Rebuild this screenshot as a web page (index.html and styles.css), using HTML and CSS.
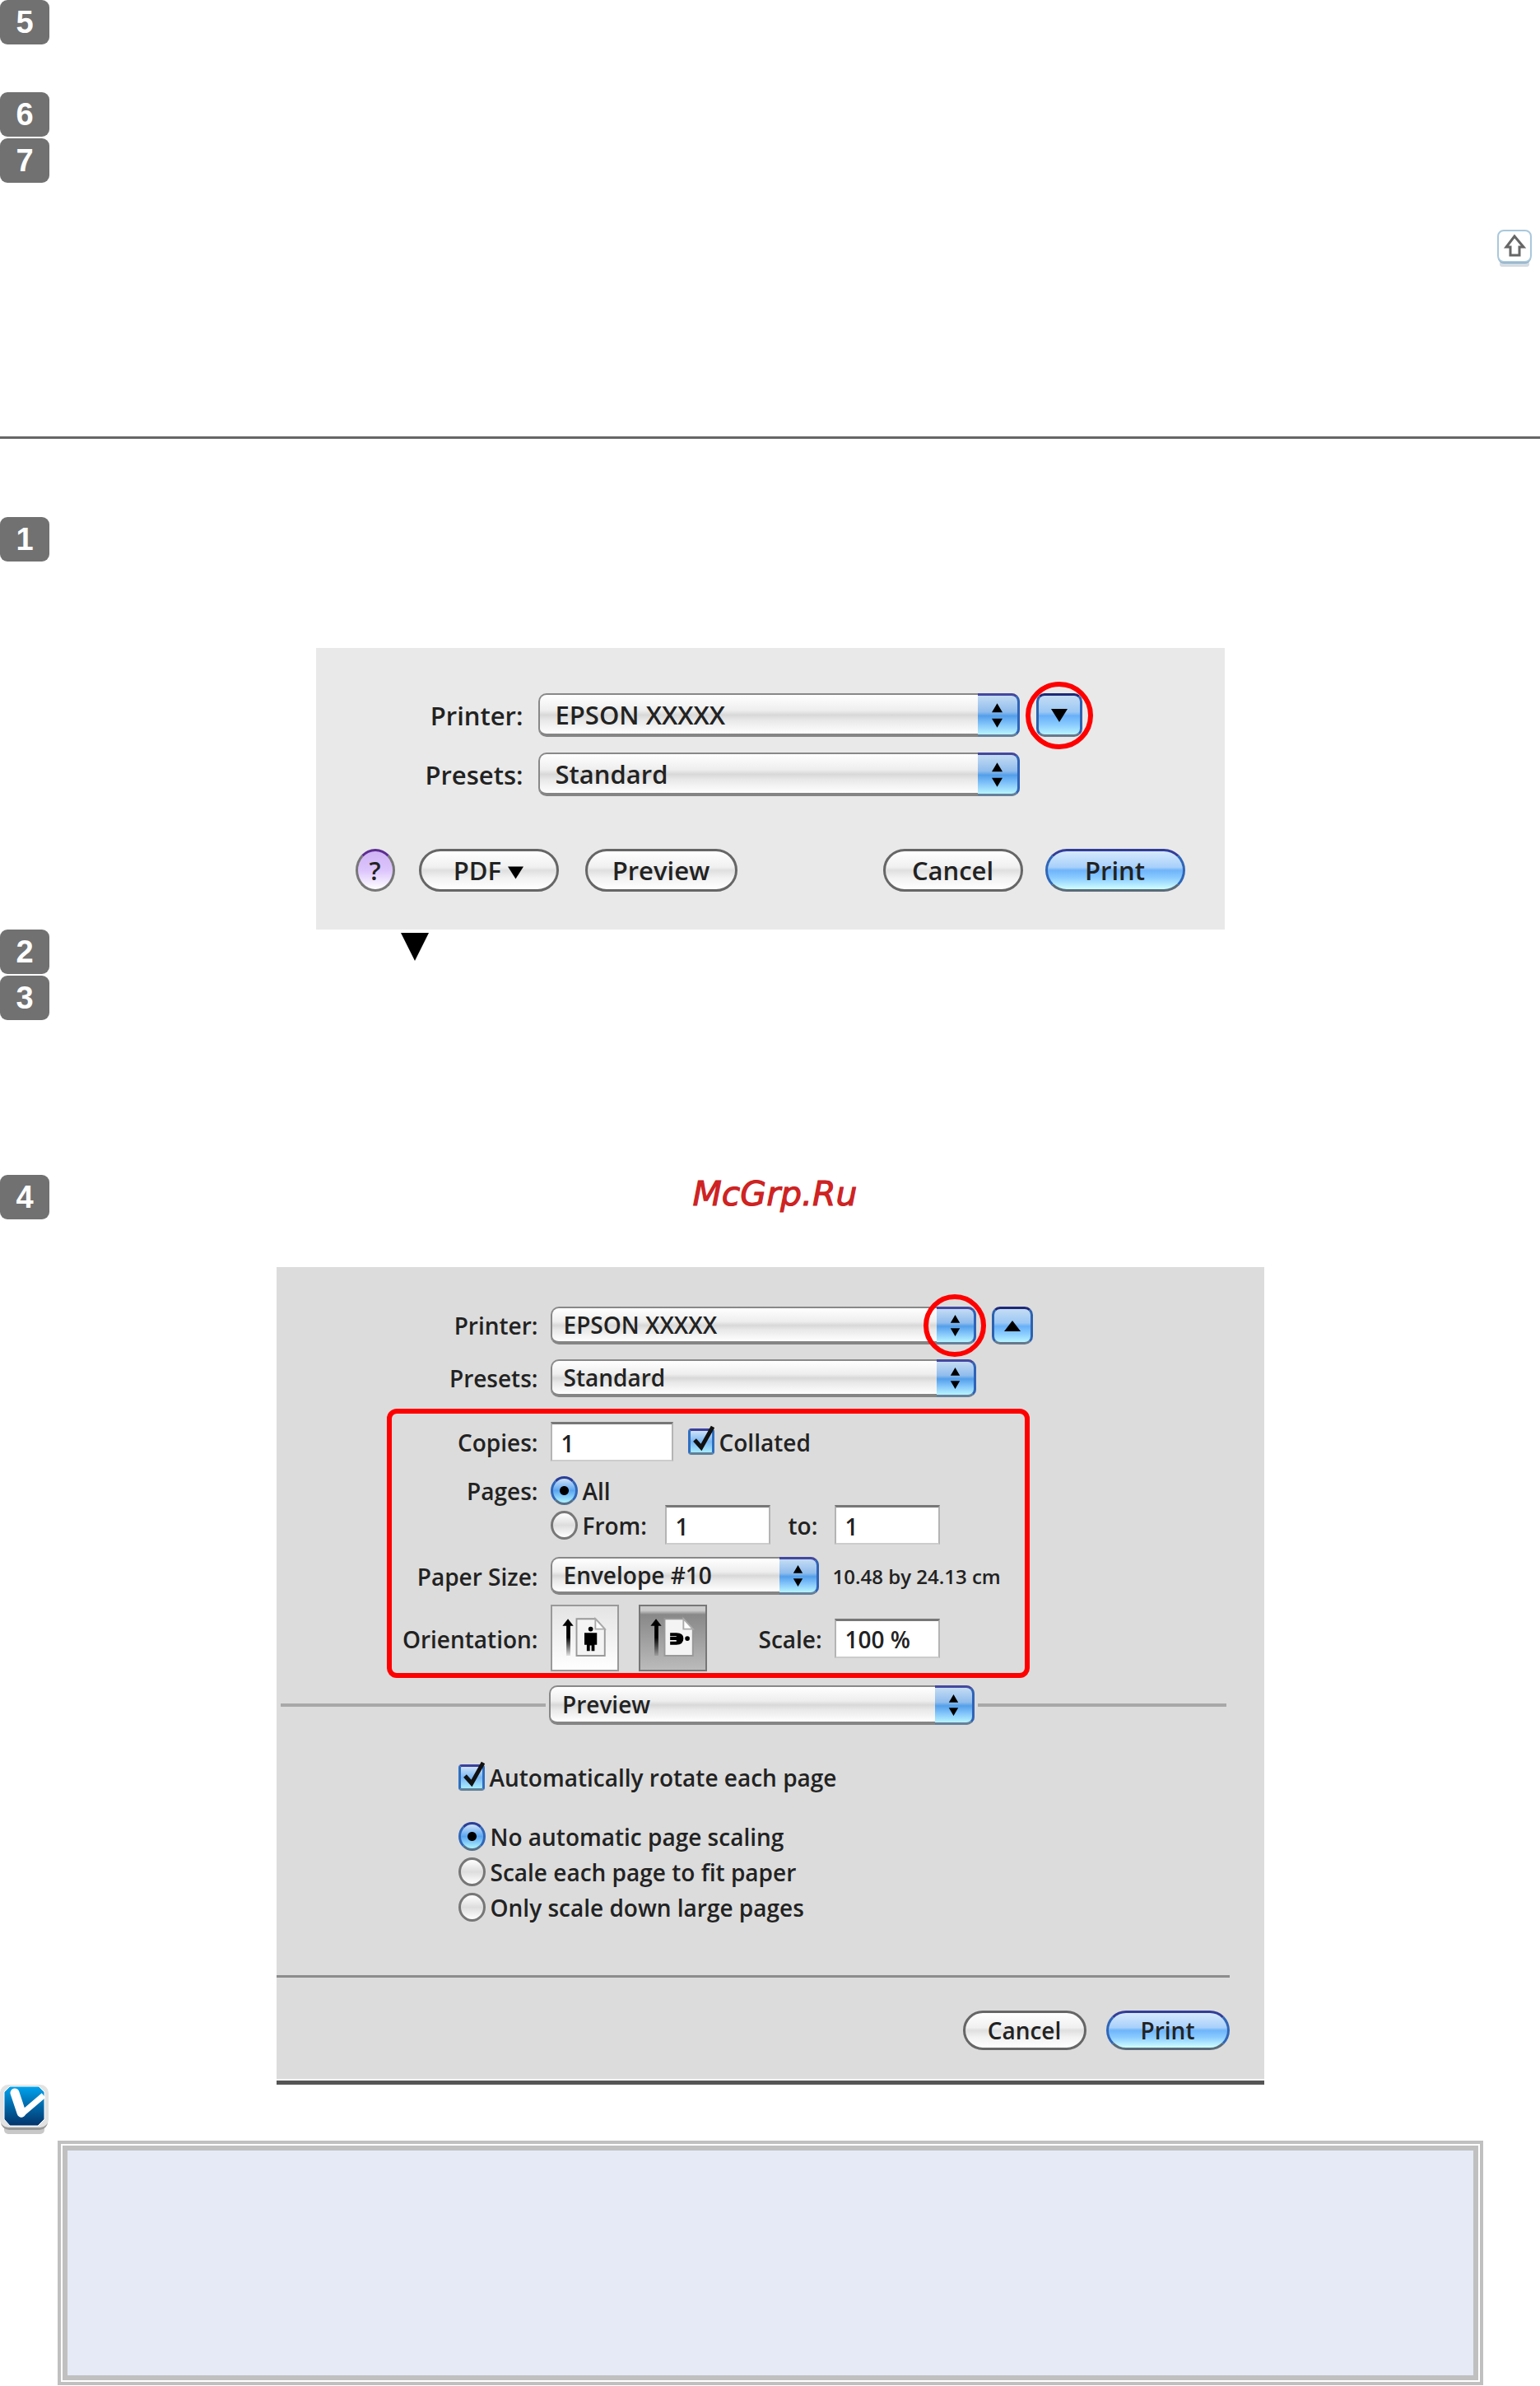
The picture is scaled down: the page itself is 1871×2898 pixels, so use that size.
FILE: index.html
```html
<!DOCTYPE html>
<html lang="en">
<head>
  <meta charset="UTF-8">
  <meta name="viewport" content="width=device-width, initial-scale=1.0">
  <title>Printing on Envelopes</title>
  <link rel="stylesheet" href="styles.css">
</head>
<body>

<!-- shared shapes -->
<svg class="defs" aria-hidden="true">
  <symbol id="updown" viewBox="0 0 14 32">
    <path d="M7 0l7 12H0zM7 32l7-12H0z"/>
  </symbol>
  <symbol id="down" viewBox="0 0 20 16"><path d="M0 0h20L10 16z"/></symbol>
  <symbol id="up" viewBox="0 0 20 13"><path d="M0 13h20L10 0z"/></symbol>
</svg>

<div class="step step-spaced"><span class="badge">5</span></div>
<div class="step"><span class="badge">6</span></div>
<div class="step"><span class="badge">7</span></div>

<div class="top-link">
  <a href="#" aria-label="Back to top">
    <svg width="42" height="46" viewBox="0 0 42 46">
      <rect x="3" y="38" width="36" height="7" rx="3" fill="#d3dbe3"/>
      <rect x="1" y="2" width="40" height="39" rx="7" fill="#7fa3bd"/>
      <rect x="1" y="1" width="40" height="38" rx="7" fill="#fff" stroke="#a9c8dc" stroke-width="2"/>
      <path d="M21 8L11 21h5v10h11V21h5z" fill="#fff" stroke="#666" stroke-width="3"/>
    </svg>
  </a>
</div>

<hr class="rule">

<div class="step"><span class="badge">1</span></div>

<form class="dialog dialog-small">
  <div class="row">
    <label class="name" for="printer1">Printer:</label>
    <span class="popup">
      <select id="printer1"><option>EPSON XXXXX</option></select>
      <span class="cap"><svg><use href="#updown"/></svg></span>
    </span>
    <button type="button" class="toggle ringed" aria-label="Show details"><svg><use href="#down"/></svg></button>
  </div>
  <div class="row">
    <label class="name" for="presets1">Presets:</label>
    <span class="popup">
      <select id="presets1"><option>Standard</option></select>
      <span class="cap"><svg><use href="#updown"/></svg></span>
    </span>
  </div>
  <div class="buttons">
    <button type="button" class="help">?</button>
    <button type="button" class="pill pdf">PDF <svg><use href="#down"/></svg></button>
    <button type="button" class="pill preview">Preview</button>
    <button type="button" class="pill cancel">Cancel</button>
    <button type="button" class="pill primary">Print</button>
  </div>
</form>

<div class="step">
  <span class="badge">2</span>
  <svg class="marker" width="34" height="34" viewBox="0 0 34 34"><path d="M0 0h34L17 34z"/></svg>
</div>
<div class="step step-3"><span class="badge">3</span></div>
<div class="step step-4">
  <span class="badge">4</span>
  <span class="brand">McGrp.Ru</span>
</div>

<form class="dialog dialog-large">
  <div class="row">
    <label class="name" for="printer2">Printer:</label>
    <span class="popup">
      <select id="printer2"><option>EPSON XXXXX</option></select>
      <span class="cap ringed"><svg><use href="#updown"/></svg></span>
    </span>
    <button type="button" class="toggle" aria-label="Hide details"><svg><use href="#up"/></svg></button>
  </div>
  <div class="row">
    <label class="name" for="presets2">Presets:</label>
    <span class="popup">
      <select id="presets2"><option>Standard</option></select>
      <span class="cap"><svg><use href="#updown"/></svg></span>
    </span>
  </div>

  <div class="settings">
    <div class="row copies">
      <label class="name" for="copies">Copies:</label>
      <input type="text" class="field wide" id="copies" value="1">
      <span class="check"><input type="checkbox" id="collated" checked><svg viewBox="0 0 32 36"><path d="M8 18l8 9L30 2"/></svg></span>
      <label for="collated">Collated</label>
    </div>
    <div class="row all">
      <span class="name">Pages:</span>
      <input type="radio" name="pages" id="all" checked>
      <label for="all">All</label>
    </div>
    <div class="row from">
      <span class="name"></span>
      <input type="radio" name="pages" id="range">
      <label class="from-label" for="range">From:</label>
      <input type="text" class="field" aria-label="From page" value="1">
      <label class="to-label" for="to">to:</label>
      <input type="text" class="field" id="to" value="1">
    </div>
    <div class="row paper">
      <label class="name" for="paper">Paper Size:</label>
      <span class="popup">
        <select id="paper"><option>Envelope #10</option></select>
        <span class="cap"><svg><use href="#updown"/></svg></span>
      </span>
      <span class="size">10.48 by 24.13 cm</span>
    </div>
    <div class="row orientation">
      <span class="name">Orientation:</span>
      <button type="button" class="orient" aria-label="Portrait">
        <svg viewBox="0 0 83 81">
          <defs>
            <linearGradient id="fade" x1="0" y1="0" x2="0" y2="1">
              <stop offset="0.5" stop-color="#000"/><stop offset="1" stop-color="#000" stop-opacity="0.1"/>
            </linearGradient>
          </defs>
          <path d="M20 16l7 9h-4v38h-5V25h-5z" fill="url(#fade)"/>
          <path d="M31 16h24l12 13v34H31z" fill="#f4f4f4" stroke="#999" stroke-width="2"/>
          <path d="M55 16v13h12z" fill="#fff" stroke="#aaa" stroke-width="2"/>
          <circle cx="49" cy="29" r="3"/>
          <path d="M41 34h16v15h-3v8h-4v-7h-2v7h-4v-8h-3z"/>
        </svg>
      </button>
      <button type="button" class="orient pressed" aria-label="Landscape">
        <svg viewBox="0 0 83 81">
          <path d="M20 16l7 9h-4v38h-5V25h-5z" fill="url(#fade)"/>
          <path d="M31 16h24l12 13v34H31z" fill="#f4f4f4" stroke="#999" stroke-width="2"/>
          <path d="M55 16v13h12z" fill="#fff" stroke="#aaa" stroke-width="2"/>
          <path d="M38 34h8q9 0 9 7q0 8-9 8h-8v-4h8v-2h-8v-4h8v-1h-8z"/>
          <circle cx="60" cy="41" r="3"/>
        </svg>
      </button>
      <label class="scale-label" for="scale">Scale:</label>
      <input type="text" class="field" id="scale" value="100 %">
    </div>
  </div>

  <div class="section">
    <span class="line"></span>
    <span class="popup">
      <select aria-label="Section"><option>Preview</option></select>
      <span class="cap"><svg><use href="#updown"/></svg></span>
    </span>
    <span class="line"></span>
  </div>

  <div class="options">
    <div class="option rotate">
      <span class="check"><input type="checkbox" id="rotate" checked><svg viewBox="0 0 32 36"><path d="M8 18l8 9L30 2"/></svg></span>
      <label for="rotate">Automatically rotate each page</label>
    </div>
    <div class="option">
      <input type="radio" name="scaling" id="none" checked>
      <label for="none">No automatic page scaling</label>
    </div>
    <div class="option">
      <input type="radio" name="scaling" id="fit">
      <label for="fit">Scale each page to fit paper</label>
    </div>
    <div class="option">
      <input type="radio" name="scaling" id="shrink">
      <label for="shrink">Only scale down large pages</label>
    </div>
  </div>

  <div class="buttons">
    <button type="button" class="pill">Cancel</button>
    <button type="button" class="pill primary">Print</button>
  </div>
</form>

<div class="note-icon">
  <svg width="59" height="60" viewBox="0 0 59 60">
    <defs>
      <linearGradient id="blue" x1="0" y1="0" x2="0" y2="1">
        <stop offset="0" stop-color="#00a4ef"/><stop offset="0.5" stop-color="#0068a8"/><stop offset="1" stop-color="#05336a"/>
      </linearGradient>
    </defs>
    <rect x="5" y="42" width="49" height="18" rx="5" fill="#c8c8c8"/>
    <rect x="1" y="4" width="57" height="51" rx="10" fill="#999"/>
    <rect x="0" y="0" width="59" height="52" rx="10" fill="#e2e2e2"/>
    <path d="M12 2h35l7 7v33l-8 8H12l-7-8V9z" fill="url(#blue)" stroke="#fff" stroke-width="1"/>
    <path d="M18 10l8 26L53 13" fill="none" stroke="#fff" stroke-width="7" stroke-linejoin="round"/>
    <path d="M18 10l8 24" fill="none" stroke="#fff" stroke-width="11" stroke-linecap="round"/>
  </svg>
</div>

<div class="note"><div class="note-body"></div></div>

</body>
</html>
```
FILE: styles.css
```css
*, *::after {
  box-sizing: border-box;
}
body {
  margin: 0;
  background: #fff;
  color: #222;
  font-family: "Open Sans", "Noto Sans", sans-serif;
  font-weight: 600;
}
button, input, select {
  font: inherit;
  color: inherit;
  margin: 0;
}
.defs {
  display: none;
}

/* numbered steps */
.step {
  display: flex;
  height: 56px;
}
.step-spaced {
  height: 112px;
}
.badge {
  width: 60px;
  height: 54px;
  flex: none;
  border-radius: 9px;
  background: #717171;
  color: #fff;
  font: bold 38px/54px "Liberation Sans", Arial, sans-serif;
  text-align: center;
}
.marker {
  margin: 4px 0 0 427px;
}
.step-3 {
  height: 242px;
}
.step-4 {
  height: 112px;
  padding-right: 48px;
}
.brand {
  flex: 1;
  text-align: center;
  color: #d42222;
  font: italic 41px/46px "DejaVu Sans", sans-serif;
  -webkit-text-stroke: 1px #c42020;
}
.top-link {
  display: flex;
  justify-content: flex-end;
  padding: 55px 10px 0 0;
}
.top-link svg {
  display: block;
}
.rule {
  height: 3px;
  margin: 205px 0 95px;
  border: 0;
  background: #666;
}

/* dialogs */
.dialog {
  margin: 0 auto;
}
.dialog-small {
  max-width: 1104px;
  margin-top: 103px;
  padding: 55px 48px 46px;
  background: #e9e9e9;
  font-size: 31px;
}
.dialog-large {
  max-width: 1200px;
  background: #dcdcdc;
  border-bottom: 5px solid #555;
  box-shadow: inset 0 -2px #f4f4f4;
  padding: 48px 0 37px;
  font-size: 28px;
}
.row {
  display: flex;
  align-items: center;
}
.name {
  flex: none;
  text-align: right;
}
.popup {
  position: relative;
  display: block;
}
.popup select {
  appearance: none;
  display: block;
  width: 100%;
  height: 100%;
  padding: 0 14px;
  border: 2px solid #888;
  border-bottom: 4px solid #858585;
  border-radius: 10px;
  background: linear-gradient(#fff, #eee 40%, #d8d8d8 52%, #e8e8e8 65%, #fff);
}
.cap {
  position: absolute;
  top: 0;
  right: 0;
  bottom: 0;
  width: 48px;
  display: flex;
  align-items: center;
  justify-content: center;
  border-top: 3px solid #4448a0;
  border-right: 3px solid #2f63b8;
  border-bottom: 3px solid #66809a;
  border-radius: 0 10px 10px 0;
  background: linear-gradient(#c4dcf4, #8fbcec 42%, #549fea 52%, #7fc2fa 72%, #b8f4ff);
  pointer-events: none;
}
.cap svg {
  width: 13px;
  height: 30px;
}
.toggle {
  position: relative;
  display: flex;
  align-items: center;
  justify-content: center;
  padding: 0;
  border: 3px solid #2c62b0;
  border-top-color: #1e2878;
  border-bottom-color: #66788c;
  border-radius: 10px;
  background: linear-gradient(#c4dcf4, #9cc8f4 42%, #68b0f8 52%, #8accff 75%, #b8f4ff);
}
.toggle svg {
  width: 20px;
  height: 16px;
}
.ringed::after {
  content: "";
  position: absolute;
  top: 50%;
  left: 50%;
  width: 82px;
  height: 82px;
  margin: -41px 0 0 -41px;
  border: 6px solid #f00;
  border-radius: 50%;
}
.buttons {
  display: flex;
}
.pill {
  height: 52px;
  padding: 0;
  border: 3px solid #666;
  border-radius: 26px;
  background: linear-gradient(#fff, #f0f0f0 42%, #dfdfdf 50%, #f2f2f2 70%, #fff);
  line-height: 44px;
}
.pill svg {
  width: 19px;
  height: 18px;
}
.primary {
  border-color: #333d99 #2f66b8 #5a6a78;
  background: linear-gradient(#d6eafc, #a8d0fa 42%, #6fb4fa 50%, #8acbff 70%, #d0ffff);
}
.help {
  width: 48px;
  height: 52px;
  padding: 0;
  border: 3px solid #777;
  border-top-color: #5c2d91;
  border-radius: 50%;
  background: linear-gradient(#d0b4f4, #dcc4fc 50%, #fff);
  line-height: 44px;
}

/* collapsed print dialog */
.dialog-small .row {
  height: 53px;
  margin-bottom: 19px;
}
.dialog-small .name {
  width: 204px;
}
.dialog-small .popup {
  width: 585px;
  height: 53px;
  margin: 0 20px 0 18px;
}
.dialog-small .popup select {
  padding-left: 19px;
}
.dialog-small .cap {
  width: 51px;
}
.dialog-small .toggle {
  width: 56px;
  height: 53px;
}
.dialog-small .buttons {
  margin-top: 64px;
}
.pdf {
  width: 170px;
  margin-left: 29px;
}
.preview {
  width: 185px;
  margin-left: 32px;
}
.cancel {
  width: 170px;
  margin: 0 27px 0 auto;
}
.dialog-small .primary {
  width: 170px;
}

/* expanded print dialog */
.dialog-large > .row {
  height: 46px;
  margin-bottom: 18px;
}
.dialog-large .name {
  width: 318px;
  margin-right: 15px;
}
.dialog-large .popup {
  width: 517px;
  height: 46px;
}
.dialog-large .toggle {
  width: 50px;
  height: 46px;
  margin-left: 19px;
}
.dialog-large .cap svg {
  height: 26px;
}
.dialog-large .toggle svg {
  height: 13px;
}
.dialog-large .ringed::after {
  width: 76px;
  height: 76px;
  margin: -38px 0 0 -38px;
}
.settings {
  max-width: 781px;
  margin: -4px 0 9px 134px;
  padding: 10px 0 2px;
  border: 6px solid #f00;
  border-radius: 12px;
}
.dialog-large .settings .name {
  width: 178px;
}
.field {
  width: 128px;
  height: 48px;
  padding: 2px 11px 0;
  border: 2px solid #b4b4b4;
  border-top: 3px solid #777;
  border-bottom-color: #ccc;
  background: #fff;
}
.field.wide {
  width: 149px;
}
.check {
  position: relative;
  display: block;
  width: 32px;
  height: 32px;
  flex: none;
}
.check input {
  appearance: none;
  display: block;
  width: 32px;
  height: 32px;
  border: 3px solid #2f6fc0;
  border-top-color: #3a3f9c;
  border-bottom-color: #5f8098;
  border-radius: 4px;
  background: linear-gradient(#cfe2f8, #7ab6f2 50%, #a8ecff);
}
.check svg {
  position: absolute;
  left: 0;
  bottom: 0;
  width: 32px;
  height: 36px;
  fill: none;
  stroke: #111;
  stroke-width: 5;
  pointer-events: none;
}
input[type="radio"] {
  appearance: none;
  width: 33px;
  height: 35px;
  flex: none;
  border: 3px solid #777;
  border-radius: 50%;
  background: linear-gradient(#fff, #ddd 50%, #fff);
}
input[type="radio"]:checked {
  border-color: #2a3f98 #2f66b8 #56708a;
  background: radial-gradient(circle, #000 5px, transparent 6px), linear-gradient(#cfe2f8, #5aa5f0 50%, #b0f4ff);
}
.settings label, .settings .name {
  padding-top: 2px;
}
.copies .check {
  margin: 0 6px 0 18px;
}
.all {
  height: 36px;
  margin-top: 17px;
}
.all label, .from-label {
  margin-left: 6px;
}
.from-label {
  width: 100px;
}
.to-label {
  width: 56px;
  margin-left: 22px;
}
.paper {
  margin-top: 15px;
}
.dialog-large .paper .popup {
  width: 326px;
}
.size {
  margin-left: 17px;
  font-size: 24px;
}
.orientation {
  margin-top: 12px;
}
.orient {
  width: 83px;
  height: 81px;
  margin-right: 24px;
  padding: 0;
  border: 2px solid #999;
  background: linear-gradient(#e4e4e4, #fff);
}
.orient.pressed {
  margin-right: 63px;
  border-color: #777;
  background: linear-gradient(#ccc 5px, #888 10px, #bbb);
}
.orient svg {
  display: block;
  width: 100%;
}
.scale-label {
  width: 92px;
}
.section {
  display: flex;
  align-items: center;
  gap: 4px;
  padding: 0 46px 0 5px;
}
.dialog-large .section .popup {
  flex: none;
  height: 48px;
}
.line {
  flex: 302;
  height: 4px;
  background: #a8a8a8;
}
.line:first-child {
  flex: 323;
}
.options {
  margin-top: 42px;
  padding: 0 0 61px 221px;
}
.option {
  display: flex;
  align-items: center;
  gap: 6px;
  height: 43px;
}
.rotate {
  margin-bottom: 29px;
}
.dialog-large .buttons {
  justify-content: flex-end;
  gap: 24px;
  margin-right: 42px;
  padding-top: 40px;
  border-top: 3px solid #8c8c8c;
}
.dialog-large .pill {
  width: 150px;
  height: 48px;
  line-height: 40px;
}

/* note */
.note-icon {
  height: 68px;
}
.note-icon svg {
  display: block;
}
.note {
  margin: 0 69px 1px 70px;
  padding: 2px;
  border: 4px solid #c0c0c0;
}
.note-body {
  min-height: 285px;
  border: 6px solid #c0c0c0;
  background: #e5eaf6;
}
```
